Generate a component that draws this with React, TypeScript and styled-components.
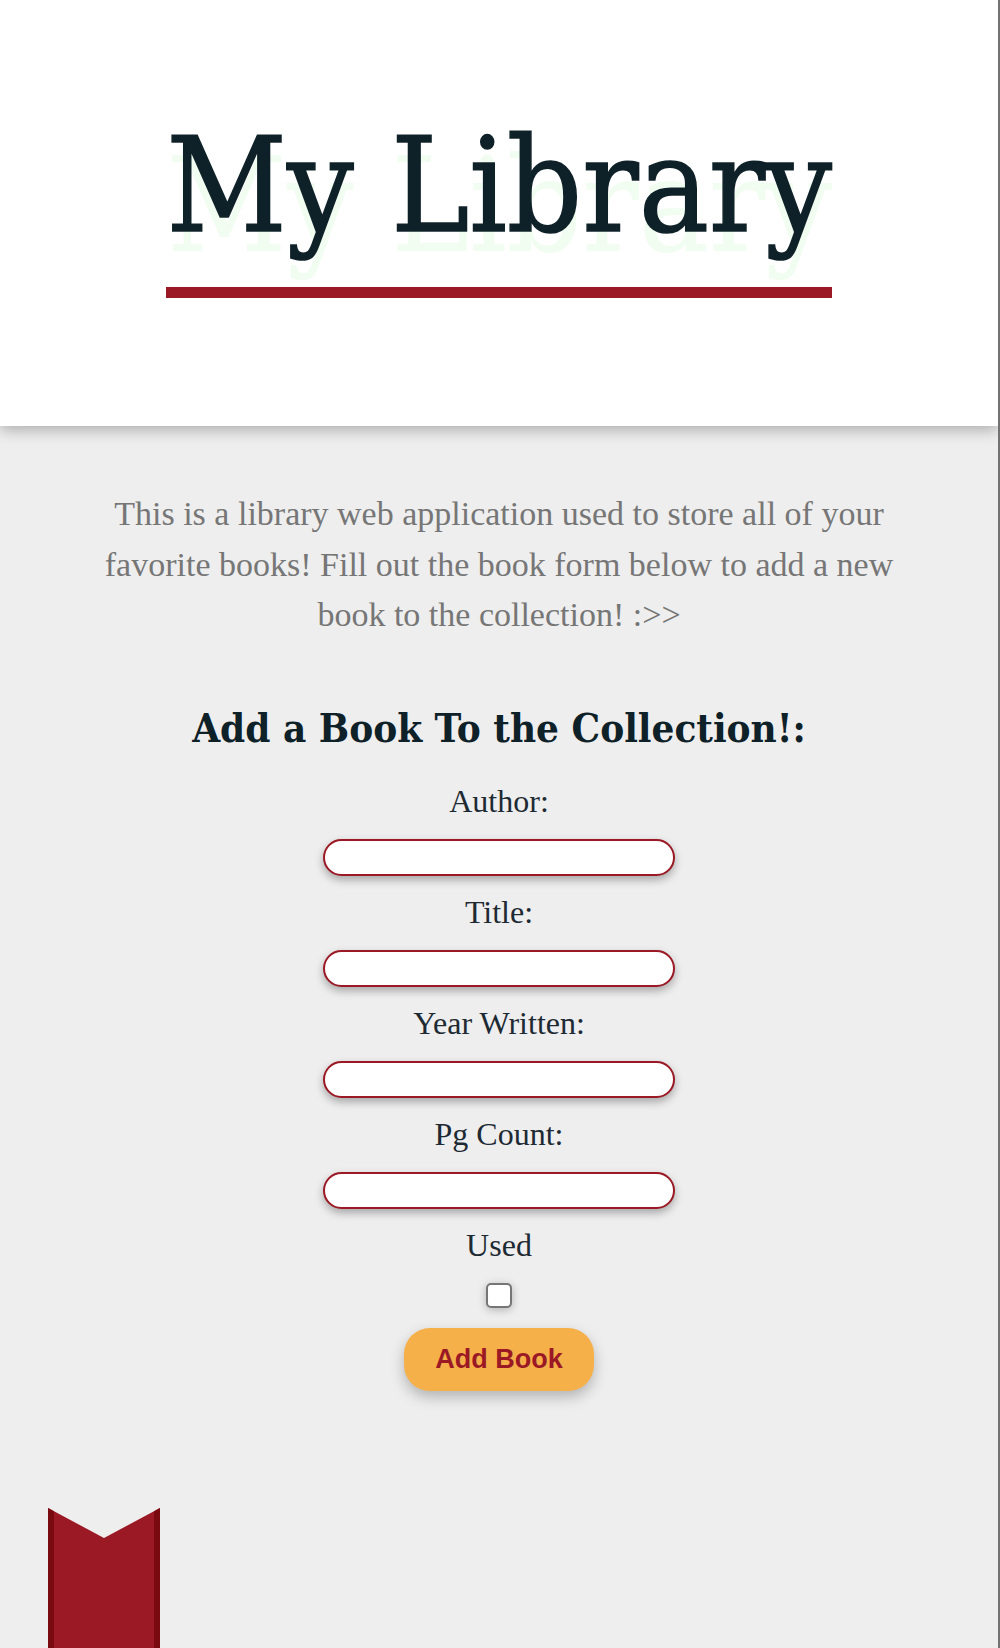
import React from "react";
import styled, { createGlobalStyle } from "styled-components";

const GlobalStyle = createGlobalStyle`
  html, body {
    margin: 0;
    padding: 0;
    background: #eeeeee;
  }
  * { box-sizing: border-box; }
`;

const Page = styled.div`
  position: relative;
  min-height: 1648px;
  background: #eeeeee;
  border-right: 2px solid #727272;
  overflow: hidden;
`;

const Header = styled.header`
  height: 426px;
  background: #ffffff;
  box-shadow: 0 4px 14px rgba(0, 0, 0, 0.28);
  display: flex;
  justify-content: center;
  align-items: flex-start;
  padding-top: 107px;
  position: relative;
  z-index: 1;
`;

const Title = styled.h1`
  margin: 0;
  font-family: "DejaVu Serif", "Liberation Serif", serif;
  font-stretch: condensed;
  font-weight: 400;
  font-size: 131px;
  line-height: 1.2;
  color: #0f2128;
  -webkit-text-stroke: 1.5px #0f2128;
  text-shadow: 0 20px 0 #f0fdf0;
  border-bottom: 11px solid #9b1925;
  padding-bottom: 23px;
`;

const Main = styled.main`
  display: flex;
  flex-direction: column;
  align-items: center;
  padding-top: 63px;
`;

const Intro = styled.p`
  margin: 0;
  width: 790px;
  text-align: center;
  font-family: "Liberation Serif", serif;
  font-size: 34px;
  line-height: 50.5px;
  color: #767676;
`;

const FormTitle = styled.h2`
  margin: 63px 0 31px;
  font-family: "DejaVu Serif", "Liberation Serif", serif;
  font-stretch: condensed;
  font-weight: 700;
  font-size: 40px;
  line-height: 48px;
  color: #0f2128;
`;

const Form = styled.form`
  display: flex;
  flex-direction: column;
  align-items: center;
`;

const Label = styled.label`
  display: block;
  font-family: "Liberation Serif", serif;
  font-size: 32px;
  line-height: 36px;
  color: #1e2a33;
  margin-bottom: 20px;
`;

const TextInput = styled.input`
  width: 352px;
  height: 37px;
  border: 2px solid #9b1925;
  border-radius: 20px;
  background: #ffffff;
  box-shadow: 0 4px 8px rgba(0, 0, 0, 0.3);
  margin: 0 0 18px;
  padding: 0 14px;
  font-size: 18px;
  outline: none;
`;

const Checkbox = styled.input`
  appearance: none;
  width: 26px;
  height: 25px;
  margin: 0 0 20px;
  border: 2px solid #767676;
  border-radius: 5px;
  background: #ffffff;
  box-shadow: 0 2px 8px rgba(0, 0, 0, 0.25);
`;

const Button = styled.button`
  width: 190px;
  height: 63px;
  border: none;
  border-radius: 26px;
  background: #f6b04a;
  color: #9b1925;
  font-family: "Liberation Sans", Arial, sans-serif;
  font-weight: 700;
  font-size: 27px;
  box-shadow: 0 6px 14px rgba(0, 0, 0, 0.25);
  cursor: pointer;
`;

const Bookmark = styled.svg`
  position: absolute;
  left: 48px;
  bottom: 0;
  width: 112px;
  height: 140px;
`;

export default function App() {
  return (
    <>
      <GlobalStyle />
      <Page>
        <Header>
          <Title>My Library</Title>
        </Header>
        <Main>
          <Intro>
            This is a library web application used to store all of your favorite
            books! Fill out the book form below to add a new book to the
            collection! :&gt;&gt;
          </Intro>
          <FormTitle>Add a Book To the Collection!:</FormTitle>
          <Form onSubmit={(e) => e.preventDefault()}>
            <Label htmlFor="author">Author:</Label>
            <TextInput id="author" type="text" />
            <Label htmlFor="title">Title:</Label>
            <TextInput id="title" type="text" />
            <Label htmlFor="year">Year Written:</Label>
            <TextInput id="year" type="text" />
            <Label htmlFor="pages">Pg Count:</Label>
            <TextInput id="pages" type="text" />
            <Label htmlFor="used">Used</Label>
            <Checkbox id="used" type="checkbox" />
            <Button type="submit">Add Book</Button>
          </Form>
        </Main>
        <Bookmark viewBox="0 0 112 140" aria-hidden="true">
          <polygon points="0,0 56,30 112,0 112,140 0,140" fill="#9b1925" />
          <polygon points="0,0 6,3.2 6,140 0,140" fill="#7a0a10" />
          <polygon points="106,3.2 112,0 112,140 106,140" fill="#7a0a10" />
        </Bookmark>
      </Page>
    </>
  );
}
